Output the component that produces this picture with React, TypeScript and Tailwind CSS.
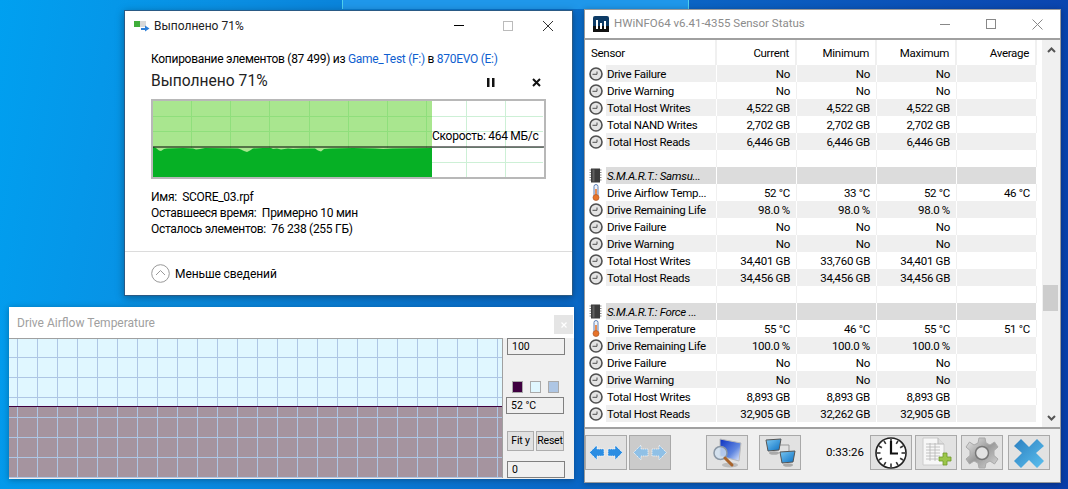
const SEGOE = "font-['Roboto','Noto_Sans',sans-serif]";

type Row = { kind: "clock" | "temp" | "head" | "blank"; name?: string; v?: string[] };

const rows: Row[] = [
  { kind: "clock", name: "Drive Failure", v: ["No", "No", "No", ""] },
  { kind: "clock", name: "Drive Warning", v: ["No", "No", "No", ""] },
  { kind: "clock", name: "Total Host Writes", v: ["4,522 GB", "4,522 GB", "4,522 GB", ""] },
  { kind: "clock", name: "Total NAND Writes", v: ["2,702 GB", "2,702 GB", "2,702 GB", ""] },
  { kind: "clock", name: "Total Host Reads", v: ["6,446 GB", "6,446 GB", "6,446 GB", ""] },
  { kind: "blank" },
  { kind: "head", name: "S.M.A.R.T.: Samsu..." },
  { kind: "temp", name: "Drive Airflow Temp...", v: ["52 °C", "33 °C", "52 °C", "46 °C"] },
  { kind: "clock", name: "Drive Remaining Life", v: ["98.0 %", "98.0 %", "98.0 %", ""] },
  { kind: "clock", name: "Drive Failure", v: ["No", "No", "No", ""] },
  { kind: "clock", name: "Drive Warning", v: ["No", "No", "No", ""] },
  { kind: "clock", name: "Total Host Writes", v: ["34,401 GB", "33,760 GB", "34,401 GB", ""] },
  { kind: "clock", name: "Total Host Reads", v: ["34,456 GB", "34,456 GB", "34,456 GB", ""] },
  { kind: "blank" },
  { kind: "head", name: "S.M.A.R.T.: Force ..." },
  { kind: "temp", name: "Drive Temperature", v: ["55 °C", "46 °C", "55 °C", "51 °C"] },
  { kind: "clock", name: "Drive Remaining Life", v: ["100.0 %", "100.0 %", "100.0 %", ""] },
  { kind: "clock", name: "Drive Failure", v: ["No", "No", "No", ""] },
  { kind: "clock", name: "Drive Warning", v: ["No", "No", "No", ""] },
  { kind: "clock", name: "Total Host Writes", v: ["8,893 GB", "8,893 GB", "8,893 GB", ""] },
  { kind: "clock", name: "Total Host Reads", v: ["32,905 GB", "32,262 GB", "32,905 GB", ""] },
];

const ClockIcon = () => (
  <svg width="14" height="14" viewBox="0 0 14 14">
    <circle cx="7" cy="7" r="6" fill="#e4e4e4" stroke="#505050" strokeWidth="1.600" />
    <path d="M3.500 7.300H8V4.500" fill="none" stroke="#505050" strokeWidth="1" />
  </svg>
);

const ThermoIcon = () => (
  <svg width="10" height="17" viewBox="0 0 10 17">
    <rect x="3" y="0.500" width="4" height="12" rx="2" fill="#eef3fa" stroke="#5f7fb5" />
    <rect x="4.200" y="5" width="1.600" height="8" fill="#e8742a" />
    <circle cx="5" cy="13.500" r="3" fill="#e8742a" stroke="#a95a2c" strokeWidth="0.700" />
  </svg>
);

const ChipIcon = () => (
  <svg width="13" height="15" viewBox="0 0 13 15">
    <rect x="2" y="0.500" width="9" height="14" fill="#3c3c3c" />
    <path d="M0.500 2H2M0.500 4.500H2M0.500 7H2M0.500 9.500H2M0.500 12H2M11 2H12.500M11 4.500H12.500M11 7H12.500M11 9.500H12.500M11 12H12.500" stroke="#888" strokeWidth="1" />
    <rect x="3.500" y="1.500" width="2" height="12" fill="#606060" />
  </svg>
);

// copy progress chart, 391x76
const SpeedChart = () => {
  const vs = [38, 77, 116, 156, 195, 234, 273, 313, 352];
  const hs = [15, 30, 46, 61];
  const wiggle =
    "M0 46L3 47L6 49.500L8 50L11 48L14 47.500L30 47L40 47.500L43 48.500L47 48L52 47L85 47.500L88 48.500L91 50L94 51L97 49.500L100 47.500L110 47L118 47L120 48L124 47.500L128 48.500L135 47.500L140 48L150 47.500L162 47.500L165 49.500L168 50.500L171 48L178 47.500L200 47L222 47.500L230 48L240 47.500L279 47L279 76L0 76Z";
  return (
    <svg width="391" height="76" viewBox="0 0 391 76" className="block">
      <rect width="391" height="76" fill="#fff" />
      {vs.map((x) => (
        <line key={x} x1={x + 0.5} x2={x + 0.5} y1="0" y2="76" stroke="#cdf0d6" />
      ))}
      {hs.map((y) => (
        <line key={y} x1="0" x2="390" y1={y + 0.5} y2={y + 0.5} stroke="#cdf0d6" />
      ))}
      <rect width="279" height="76" fill="#a9e68f" />
      {vs.filter((x) => x < 279).map((x) => (
        <line key={x} x1={x + 0.5} x2={x + 0.5} y1="0" y2="47" stroke="#8fdf7c" />
      ))}
      {hs.filter((y) => y < 46).map((y) => (
        <line key={y} x1="0" x2="279" y1={y + 0.5} y2={y + 0.5} stroke="#8fdf7c" />
      ))}
      <path d={wiggle} fill="#06b025" />
      <line x1="0" x2="391" y1="46" y2="46" stroke="#000" strokeWidth="1.200" />
    </svg>
  );
};

// sensor history chart, 494x140
const TempChart = () => {
  const vs = Array.from({ length: 25 }, (_, i) => 8 + i * 20);
  const hs = [19, 39, 59, 79, 99, 119, 139];
  return (
    <svg width="494" height="140" viewBox="0 0 494 140" className="block">
      <rect width="494" height="140" fill="#e0f7ff" />
      <rect y="69" width="494" height="71" fill="#a5949f" />
      {vs.map((x) => (
        <line key={x} x1={x + 0.5} x2={x + 0.5} y1="0" y2="140" stroke="#aec6e4" />
      ))}
      {hs.map((y) => (
        <line key={y} x1="0" x2="494" y1={y + 0.5} y2={y + 0.5} stroke="#aec6e4" />
      ))}
      <line x1="0" x2="494" y1="68.500" y2="68.500" stroke="#3f0040" />
      <rect width="494" height="1" fill="#a0a0a0" />
      <rect x="493" width="1" height="140" fill="#a0a0a0" />
    </svg>
  );
};

const CopyIcon = () => (
  <svg width="16" height="12" viewBox="0 0 16 12">
    <rect x="0" y="1" width="6" height="6" fill="#3fae3a" />
    <rect x="6" y="1" width="6" height="6" fill="#d8d8d8" />
    <path d="M7 8H11V5.500L15.500 8.500L11 11.500V10H7Z" fill="#2f80d8" />
  </svg>
);

const AppIcon = () => (
  <svg width="16" height="16" viewBox="0 0 16 16">
    <rect width="16" height="16" rx="2" fill="#0d3b66" />
    <rect y="10" width="16" height="6" fill="#111" />
    <path d="M3 4H5V13H3ZM7 7H9V13H7ZM11 5H13V13H11Z" fill="#fff" />
  </svg>
);

const ToolBtn = ({ children, off, className }: { children: React.ReactNode; off?: boolean; className: string }) => (
  <div className={`w-[42px] h-[35px] flex items-center justify-center border border-[#a9a9a9] ${off ? "bg-[#cbcbcb]" : "bg-[#e2e2e2]"} ${className}`}>
    {children}
  </div>
);

const Arrows = ({ inward }: { inward?: boolean }) => {
  const fill = inward ? "#8fc0e6" : "#2b8de2";
  const left = "M0.500 8.500L8 1V5H15V12H8V16Z";
  return (
    <svg width="34" height="17" viewBox="0 0 34 17">
      <g transform={inward ? "translate(34 0) scale(-1 1)" : undefined}>
        <path d={left} fill={fill} stroke="#fff" strokeWidth="0.700" strokeDasharray="1.500 0.800" />
        <path d={left} fill={fill} stroke="#fff" strokeWidth="0.700" strokeDasharray="1.500 0.800" transform="translate(34 0) scale(-1 1)" />
      </g>
    </svg>
  );
};

const ScreenIcon = () => (
  <svg width="32" height="32" viewBox="0 0 32 32">
    <defs>
      <linearGradient id="scr" x1="0" y1="0" x2="1" y2="1">
        <stop offset="0" stopColor="#0a2fc0" />
        <stop offset="0.6" stopColor="#5f86e0" />
        <stop offset="1" stopColor="#eef3ff" />
      </linearGradient>
    </defs>
    <path d="M9 2L30 6L28 24L9 19Z" fill="url(#scr)" stroke="#bbb" />
    <ellipse cx="19" cy="28" rx="8" ry="2.500" fill="#bcbcbc" />
    <circle cx="9.500" cy="16" r="6.500" fill="#cfe0f0" fillOpacity="0.800" stroke="#8a97a5" strokeWidth="1.500" />
    <path d="M14 21L21 28" stroke="#a8642c" strokeWidth="3" strokeLinecap="round" />
  </svg>
);

const NetIcon = () => (
  <svg width="32" height="32" viewBox="0 0 32 32">
    <defs>
      <linearGradient id="net" x1="0" y1="0" x2="1" y2="1">
        <stop offset="0" stopColor="#7cc8f2" />
        <stop offset="1" stopColor="#0a70c4" />
      </linearGradient>
    </defs>
    <path d="M16 8H25V14" fill="none" stroke="#999" />
    <path d="M2 3L17 2L15 13L4 14Z" fill="url(#net)" stroke="#555" />
    <ellipse cx="10" cy="16" rx="5" ry="1.800" fill="#aaa" />
    <path d="M16 15L31 14L29 25L18 26Z" fill="url(#net)" stroke="#555" />
    <ellipse cx="24" cy="28" rx="5" ry="1.800" fill="#aaa" />
  </svg>
);

const ClockBig = () => (
  <svg width="32" height="32" viewBox="0 0 32 32">
    <circle cx="16" cy="16" r="15" fill="#fff" stroke="#222" strokeWidth="1.600" />
    {Array.from({ length: 12 }, (_, i) => (
      <line key={i} x1="16" y1="2" x2="16" y2="5.500" stroke="#333" strokeWidth="1.600" transform={`rotate(${i * 30} 16 16)`} />
    ))}
    <path d="M16 4V16.500H23" fill="none" stroke="#111" strokeWidth="2.200" />
  </svg>
);

const SheetIcon = () => (
  <svg width="32" height="32" viewBox="0 0 32 32">
    <path d="M3 1H18L24 7V28H3Z" fill="#f7f7f7" stroke="#ccc" />
    <path d="M18 1V7H24" fill="#ddd" stroke="#bbb" />
    <path d="M6 7H18M6 10H20M6 13H20M6 16H20M6 19H20M6 22H18M10 6V24M15 6V24" stroke="#b5b5b5" strokeWidth="0.800" />
    <path d="M19 20H23V16H27V20H31V24H27V28H23V24H19Z" fill="#9cc64a" stroke="#6f9a2a" strokeWidth="0.800" />
  </svg>
);

const GearIcon = () => (
  <svg width="34" height="34" viewBox="0 0 34 34">
    <defs>
      <linearGradient id="gear" x1="0" y1="0" x2="1" y2="1">
        <stop offset="0" stopColor="#ececec" />
        <stop offset="0.500" stopColor="#9a9a9a" />
        <stop offset="1" stopColor="#d8d8d8" />
      </linearGradient>
    </defs>
    <path
      d="M14 2H20L21 7L25 9L29.500 6L33 11L29 14.500V19.500L33 23L29.500 28L25 25L21 27L20 32H14L13 27L9 25L4.500 28L1 23L5 19.500V14.500L1 11L4.500 6L9 9L13 7Z"
      fill="url(#gear)"
      stroke="#aaa"
    />
    <circle cx="17" cy="17" r="6.500" fill="#e2e2e2" stroke="#777" strokeWidth="1.500" />
  </svg>
);

const CloseBig = () => (
  <svg width="32" height="32" viewBox="0 0 32 32">
    <defs>
      <linearGradient id="cx" x1="0" y1="0" x2="1" y2="1">
        <stop offset="0" stopColor="#2b7fc0" />
        <stop offset="1" stopColor="#5cc0ef" />
      </linearGradient>
    </defs>
    <path d="M8 2L16 10L24 2L31 9L23 16L31 24L24 31L16 23L8 31L1 24L9 16L1 9Z" fill="url(#cx)" />
  </svg>
);

const CopyWindow = () => (
  <div className={`absolute left-[124px] top-[10px] w-[449px] h-[286px] bg-white border border-[#2a5a85] shadow-[0_2px_8px_rgba(0,0,0,0.35)] flex flex-col text-[12px] text-black ${SEGOE}`}>
    <div className="h-[29px] flex items-center pl-[9px] shrink-0">
      <CopyIcon />
      <span className="ml-[4px] text-[12px] text-[#222]">Выполнено 71%</span>
      <div className="ml-auto flex items-center">
        <div className="w-[10px] h-px bg-black mr-[39px]" />
        <div className="w-[10px] h-[10px] border border-[#bbb] mr-[29px]" />
        <svg width="12" height="12" viewBox="0 0 12 12" className="mr-[18px]">
          <path d="M1 1L11 11M11 1L1 11" stroke="#333" />
        </svg>
      </div>
    </div>
    <div className="px-[26px] pt-[11px] flex-1 flex flex-col">
      <div className="leading-[16px] tracking-[-0.28px] whitespace-nowrap">
        Копирование элементов (87 499) из <span className="text-[#0f5fd0]">Game_Test (F:)</span> в <span className="text-[#0f5fd0]">870EVO (E:)</span>
      </div>
      <div className="flex items-center mt-[4px] h-[22px]">
        <span className="text-[15.600px] text-[#222]">Выполнено 71%</span>
        <div className="ml-auto flex items-center">
          <svg width="8" height="9" viewBox="0 0 8 9" className="mr-[37px]">
            <path d="M0 0H2.500V9H0ZM5 0H7.500V9H5Z" fill="#111" />
          </svg>
          <svg width="9" height="9" viewBox="0 0 9 9" className="mr-[5px]">
            <path d="M1 1L8 8M8 1L1 8" stroke="#111" strokeWidth="2" />
          </svg>
        </div>
      </div>
      <div className="relative mt-[6px] w-[395px] h-[80px] border-2 border-[#b8b8b8]">
        <SpeedChart />
        <span className="absolute left-[279px] top-[27px] leading-[16px] tracking-[-0.28px] whitespace-nowrap">Скорость: 464 МБ/с</span>
      </div>
      <div className="mt-[10px] leading-[16px] tracking-[-0.28px] whitespace-pre">
        <div>Имя:  SCORE_03.rpf</div>
        <div>Оставшееся время:  Примерно 10 мин</div>
        <div>Осталось элементов:  76 238 (255 ГБ)</div>
      </div>
    </div>
    <div className="h-[44px] border-t border-[#dcdcdc] flex items-center pl-[26px] shrink-0">
      <svg width="19" height="19" viewBox="0 0 19 19">
        <circle cx="9.500" cy="9.500" r="8.800" fill="#fff" stroke="#999" />
        <path d="M5 11L9.500 6.500L14 11" fill="none" stroke="#999" />
      </svg>
      <span className="ml-[5px] tracking-[-0.1px]">Меньше сведений</span>
    </div>
  </div>
);

const ValueBox = ({ text, className }: { text: string; className: string }) => (
  <div className={`w-[58px] h-[17px] border border-[#808080] bg-[#f0f0f0] pl-[4px] text-[10.500px] leading-[15px] ${className}`}>{text}</div>
);

const GraphWindow = () => (
  <div className={`absolute left-[9px] top-[307px] w-[565px] h-[172px] bg-[#f0f0f0] shadow-[0_1px_6px_rgba(0,0,0,0.3)] flex flex-col text-black ${SEGOE}`}>
    <div className="h-[31px] bg-white flex items-center pl-[8px] shrink-0 relative">
      <span className="text-[12px] text-[#a0a0a0]">Drive Airflow Temperature</span>
      <div className="absolute right-[1px] top-[8px] w-[19px] h-[19px] bg-[#e5e5e5] flex items-center justify-center">
        <svg width="6" height="6" viewBox="0 0 6 6">
          <path d="M0.500 0.500L5.500 5.500M5.500 0.500L0.500 5.500" stroke="#fff" strokeWidth="1.200" />
        </svg>
      </div>
    </div>
    <div className="flex flex-1">
      <TempChart />
      <div className="flex-1 flex flex-col">
        <ValueBox text="100" className="ml-[4px]" />
        <div className="flex ml-[9px] mt-[26px] gap-[7px]">
          <div className="w-[11px] h-[12px] border border-[#aaa] bg-[#3f0040]" />
          <div className="w-[11px] h-[12px] border border-[#aaa] bg-[#e0f7ff]" />
          <div className="w-[11px] h-[12px] border border-[#aaa] bg-[#aec6e4]" />
        </div>
        <ValueBox text="52 °C" className="ml-[3px] mt-[4px]" />
        <div className="flex ml-[4px] mt-[17px] gap-[2px] text-[10.500px] tracking-[-0.2px]">
          <div className="w-[27px] h-[20px] border border-[#adadad] bg-[#e1e1e1] flex items-center justify-center">Fit y</div>
          <div className="w-[28px] h-[20px] border border-[#adadad] bg-[#e1e1e1] flex items-center justify-center">Reset</div>
        </div>
        <ValueBox text="0" className="ml-[4px] mt-[10px]" />
      </div>
    </div>
  </div>
);

const SensorRow = ({ row, index }: { row: Row; index: number }) => {
  const head = row.kind === "head";
  const shade = head ? "bg-[#dcdcdc]" : index % 2 === 0 ? "bg-[#efefef]" : "bg-white";
  const sep = shade === "bg-white" ? "border-[#f0f0f0]" : "border-white";
  const vals = row.v ?? ["", "", "", ""];
  return (
    <div className="flex h-[17px] leading-[18px]">
      <div className="w-[21px] flex items-center justify-center shrink-0">
        {row.kind === "clock" && <ClockIcon />}
        {row.kind === "temp" && <ThermoIcon />}
        {head && <ChipIcon />}
      </div>
      <div className={`w-[111px] pl-[1px] whitespace-nowrap border-r ${sep} ${shade} ${head ? "italic" : ""}`}>{row.name}</div>
      {vals.map((val, i) => (
        <div key={i} className={`w-[80px] pr-[6px] text-right border-r ${sep} ${shade}`}>{val}</div>
      ))}
    </div>
  );
};

const SensorWindow = () => (
  <div className={`absolute left-[584px] top-[9px] w-[477px] h-[474px] bg-white border border-[#9a9a9a] shadow-[0_1px_6px_rgba(0,0,0,0.3)] flex flex-col text-[11.500px] tracking-[-0.3px] text-black ${SEGOE}`}>
    <div className="h-[30px] flex items-center pl-[8px] border-b-2 border-[#a0a0a0] shrink-0">
      <AppIcon />
      <span className="ml-[5px] text-[#8c8c8c] text-[11.500px] tracking-normal">HWiNFO64 v6.41-4355 Sensor Status</span>
      <div className="ml-auto flex items-center">
        <div className="w-[10px] h-px bg-[#888] mr-[36px]" />
        <div className="w-[10px] h-[10px] border border-[#888] mr-[36px]" />
        <svg width="11" height="11" viewBox="0 0 11 11" className="mr-[17px]">
          <path d="M0.500 0.500L10.500 10.500M10.500 0.500L0.500 10.500" stroke="#888" />
        </svg>
      </div>
    </div>
    <div className="flex h-[387px] shrink-0">
      <div className="w-[456px] flex flex-col">
        <div className="flex h-[25px] leading-[27px] shrink-0">
          <div className="w-[132px] pl-[6px] border-r-2 border-[#f0f0f0]">Sensor</div>
          {["Current", "Minimum", "Maximum", "Average"].map((h) => (
            <div key={h} className="w-[80px] pr-[6px] text-right border-r-2 border-[#f0f0f0]">{h}</div>
          ))}
        </div>
        {rows.map((row, i) => (
          <SensorRow key={i} row={row} index={i} />
        ))}
      </div>
      <div className="w-[18px] ml-auto bg-[#f0f0f0] flex flex-col items-center relative">
        <svg width="9" height="6" viewBox="0 0 9 6" className="mt-[7px]">
          <path d="M1 5L4.500 1.500L8 5" fill="none" stroke="#555" strokeWidth="2" />
        </svg>
        <div className="absolute left-px top-[245px] w-[15px] h-[26px] bg-[#cdcdcd]" />
        <svg width="9" height="6" viewBox="0 0 9 6" className="mt-auto mb-[6px]">
          <path d="M1 1L4.500 4.500L8 1" fill="none" stroke="#555" strokeWidth="2" />
        </svg>
      </div>
    </div>
    <div className="flex-1 bg-[#f0f0f0] border-t-2 border-[#a0a0a0] flex items-center pb-[6px]">
      <ToolBtn className=""><Arrows /></ToolBtn>
      <ToolBtn off className="ml-[2px]"><Arrows inward /></ToolBtn>
      <ToolBtn className="ml-[35px]"><ScreenIcon /></ToolBtn>
      <ToolBtn className="ml-[11px]"><NetIcon /></ToolBtn>
      <span className="ml-[25px] w-[44px] text-[11.500px] tracking-normal">0:33:26</span>
      <ToolBtn className=""><ClockBig /></ToolBtn>
      <ToolBtn className="ml-[3px]"><SheetIcon /></ToolBtn>
      <ToolBtn className="ml-[4px]"><GearIcon /></ToolBtn>
      <ToolBtn className="ml-[5px]"><CloseBig /></ToolBtn>
    </div>
  </div>
);

const App = () => {
  return (
    <div className="relative w-[1068px] h-[489px] overflow-hidden bg-[linear-gradient(100deg,#00a0f0_0%,#0a8ee2_20%,#0a6ecb_50%,#0a55ba_75%,#0a3eaa_100%)]">
      {/* lighter band of a window behind, shows above the others */}
      <div className="absolute left-[342px] top-0 w-[347px] h-[9px] bg-[#1f97ea] border-x border-[#4fd0ee]" />
      <CopyWindow />
      <GraphWindow />
      <SensorWindow />
    </div>
  );
};

export default App;
